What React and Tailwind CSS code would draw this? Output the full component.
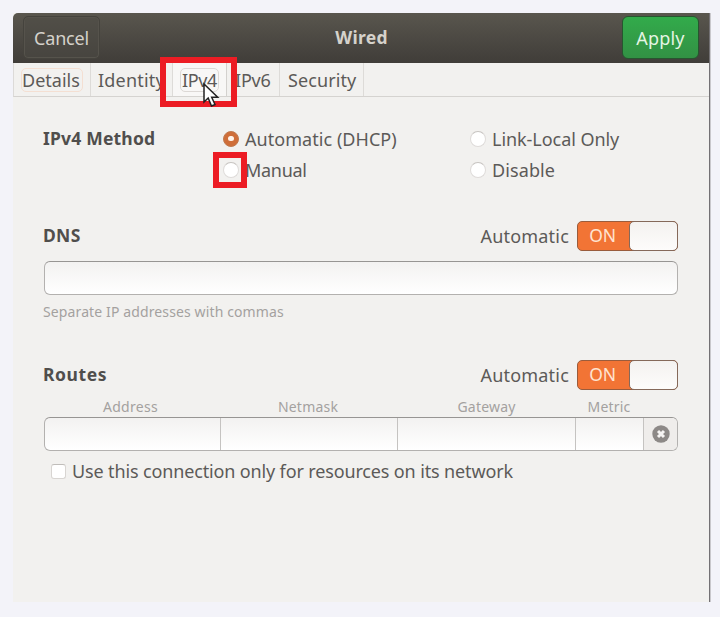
import React from 'react';

function Radio({ checked }) {
  return checked ? (
    <span className="flex h-4 w-4 shrink-0 items-center justify-center rounded-full border border-[#c07a50] bg-[#cf6e39]">
      <span className="h-[5px] w-[6px] rounded-full bg-[#fff3ea]" />
    </span>
  ) : (
    <span className="h-4 w-4 shrink-0 rounded-full border border-[#dedbd9] border-t-[#c6c3c0] bg-white" />
  );
}

function Option({ label, checked, tracking }) {
  return (
    <div className="flex h-[31px] items-center">
      <Radio checked={checked} />
      <span className={'ml-1.5 leading-none ' + tracking}>{label}</span>
    </div>
  );
}

function SectionHead({ title, tracking }) {
  return (
    <div className="flex h-[30px] items-center">
      <span className={'-ml-px text-[17.5px] font-bold leading-none text-[#504e4c] ' + tracking}>{title}</span>
      <span className="ml-auto mr-[8px] pb-px leading-none tracking-[0.2px]">Automatic</span>
      <div className="flex h-[30px] w-[101px] rounded-[5px] border border-[#9a5c3c] bg-[#f27435]">
        <span className="flex w-[51px] items-center justify-center pb-px pr-[2px] text-[17.5px] leading-none tracking-[-0.2px] text-[#ffe3d0]">ON</span>
        <span className="-my-px -mr-px h-[30px] flex-1 rounded-[5px] border border-[#85695a] bg-linear-to-b from-[#f4f2f0] to-[#fdfcfb]" />
      </div>
    </div>
  );
}

export default function App() {
  return (
    <div className="relative h-[617px] w-[720px] overflow-hidden bg-[#f3f3f9] pl-[13px] pt-[13px] font-['Noto_Sans',sans-serif] text-[18px] text-[#5c5a58]">
      <div className="flex h-[589px] w-[698px] flex-col border-r border-[#c9c8cc]">
        <div className="flex min-h-0 flex-1 flex-col border-r border-[#737174] bg-[#f2f1ef]">
          <header className="flex h-[50px] shrink-0 items-start justify-between rounded-tl-[5px] bg-linear-to-b from-[#59564e] to-[#403d39] pl-[10px] pr-[10px] pt-[3px] text-[#d5d2cb]">
            <button className="flex h-[43px] w-[77px] items-center justify-center rounded-[5px] border border-[#45433d] bg-[#4b4943]/50 leading-none shadow-[inset_0_0_0_1px_#56534c]">
              <span className="tracking-[-0.2px]">Cancel</span>
            </button>
            <span className="flex h-[43px] items-center pl-px text-[17.5px] font-bold leading-none tracking-[0.3px]">Wired</span>
            <button className="flex h-[43px] w-[77px] items-center justify-center rounded-[6px] border border-[#27552f] bg-linear-to-b from-[#32ab4b] to-[#329144] leading-none text-[#e5f5e3]">
              <span className="tracking-[0.2px]">Apply</span>
            </button>
          </header>

          <nav className="flex h-[34px] shrink-0 items-stretch border-b border-[#d5d3d0] border-l border-l-[#dcdad8] leading-none">
            <div className="flex w-[77px] items-center border-r border-[#dddbd8] pl-[7px]">
              <span className="flex h-[24px] w-[62px] items-center rounded-[5px] border border-[#f4dfd2]">
                <span className="tracking-[0px]">Details</span>
              </span>
            </div>
            <div className="flex w-[82px] items-center border-r border-[#dddbd8] pl-[7px] tracking-[0.2px]">Identity</div>
            <div className="flex w-[54px] items-center border-r border-[#d3d1ce] bg-[#f8f7f6] pl-[7px]">
              <span className="flex h-[24px] w-[39px] items-center justify-center rounded-[5px] border border-[#dcd8d5]">
                <span className="tracking-[-0.4px]">IPv4</span>
              </span>
            </div>
            <div className="flex w-[53px] items-center border-r border-[#dddbd8] pl-[8px] tracking-[-0.2px]">IPv6</div>
            <div className="flex w-[84px] items-center border-r border-[#dddbd8] pl-[8px] tracking-[0.1px]">Security</div>
          </nav>

          <main className="flex flex-col pl-[31px] pr-[31px] pt-[26px]">
            <section className="flex">
              <div className="-ml-px flex h-[31px] w-[180px] items-center pt-px text-[17.5px] font-bold leading-none tracking-[0.2px] text-[#504e4c]">IPv4 Method</div>
              <div className="w-[248px]">
                <Option label="Automatic (DHCP)" checked tracking="tracking-[0.05px]" />
                <Option label="Manual" tracking="tracking-[-0.3px]" />
              </div>
              <div className="-ml-px">
                <Option label="Link-Local Only" tracking="tracking-[-0.05px]" />
                <Option label="Disable" tracking="tracking-[0.1px]" />
              </div>
            </section>

            <section className="mt-[36px]">
              <SectionHead title="DNS" tracking="tracking-[0.3px]" />
              <div className="mt-[10px] h-[34px] rounded-[6px] border border-[#b3b1af] border-t-[#979593] bg-linear-to-b from-[#f3f2f1] to-white" />
              <p className="-ml-px mt-[8px] h-[18px] text-[14px] leading-[18px] tracking-[0.12px] text-[#a4a19f]">Separate IP addresses with commas</p>
            </section>

            <section className="mt-[39px]">
              <SectionHead title="Routes" tracking="tracking-[0.6px]" />
              <div className="flex h-[27px] items-center pt-[7px] pr-[34px] text-[14px] leading-none text-[#a4a19f]">
                <span className="w-[173px] text-center tracking-[0.3px]">Address</span>
                <span className="w-[182px] text-center tracking-[0.2px]">Netmask</span>
                <span className="w-[175px] text-center tracking-[0.2px]">Gateway</span>
                <span className="flex-1 text-center tracking-[0.2px]">Metric</span>
              </div>
              <div className="flex h-[34px] rounded-[6px] border border-[#b3b1af] border-t-[#979593] bg-linear-to-b from-[#f3f2f1] to-white">
                <span className="w-[176px] border-r border-[#c5c3c1]" />
                <span className="w-[177px] border-r border-[#c5c3c1]" />
                <span className="w-[178px] border-r border-[#c5c3c1]" />
                <span className="w-[68px] border-r border-[#c5c3c1]" />
                <button className="flex flex-1 items-center justify-center rounded-r-[5px] bg-[#efedeb]">
                  <svg width="18" height="18" viewBox="0 0 18 18">
                    <circle cx="9" cy="9" r="8.700" fill="#8d8987" />
                    <path d="M6 6l6 6M12 6l-6 6" stroke="#f6f4f3" strokeWidth="3" />
                  </svg>
                </button>
              </div>
              <label className="mt-[5px] flex h-[31px] items-center pl-[7px]">
                <span className="h-[15px] w-[15px] rounded-[3px] border border-[#d8d5d2] border-t-[#c0bdba] bg-white" />
                <span className="ml-[6px] whitespace-nowrap pb-px leading-none tracking-[-0.14px]">Use this connection only for resources on its network</span>
              </label>
            </section>
          </main>
        </div>
      </div>

      <div className="absolute left-[160px] top-[57px] h-[50px] w-[77px] border-6 border-[#ec1c24]" />
      <div className="absolute left-[213px] top-[152px] h-[36px] w-[34px] border-6 border-[#ec1c24]" />
      <svg className="absolute left-[202px] top-[82px]" width="18" height="26" viewBox="0 0 18 26">
        <path d="M2 2v18l4.200-4 3.300 8 3.500-1.500-3.300-7.300h6z" fill="#fff" stroke="#222" strokeWidth="1.500" />
      </svg>
    </div>
  );
}
